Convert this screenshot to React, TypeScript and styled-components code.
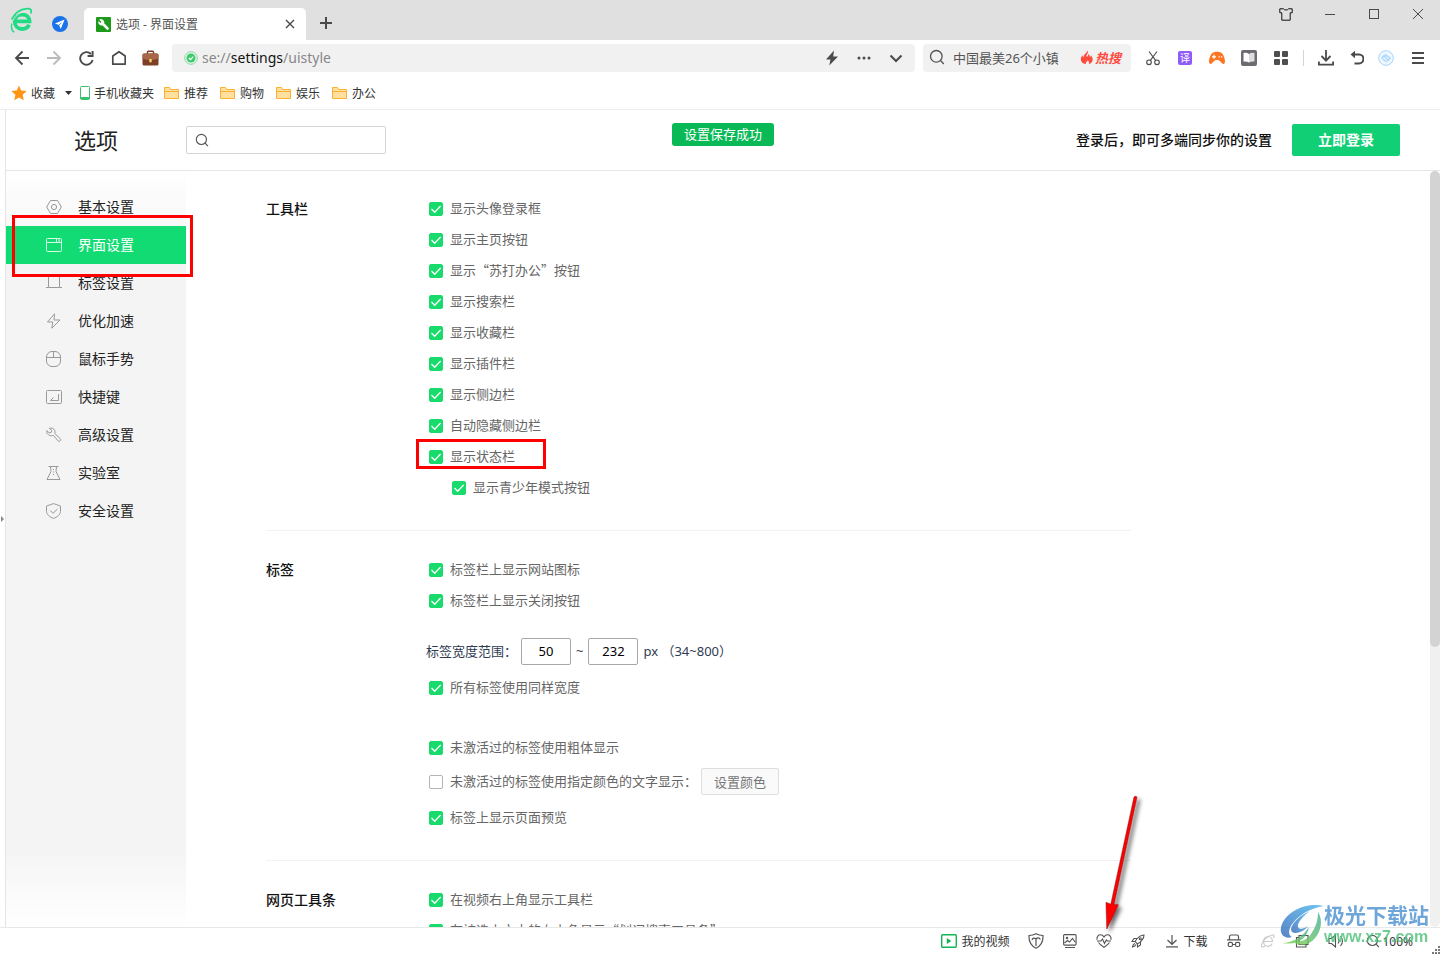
import React from "react";
import styled, { createGlobalStyle, css } from "styled-components";

const GlobalStyle = createGlobalStyle`
  *, *::before, *::after { box-sizing: border-box; }
  html, body, #root { height: 100%; margin: 0; }
  body {
    font-family: "Noto Sans", "Noto Sans CJK SC", sans-serif;
    font-size: 13px;
    color: #222;
    background: #fff;
    overflow: hidden;
  }
  button, input { font: inherit; color: inherit; }
  svg { display: block; flex: none; }
`;

const Window = styled.div`
  position: relative;
  display: flex;
  flex-direction: column;
  height: 100vh;
  white-space: nowrap;
`;

/* ---------- title bar ---------- */

const TitleBar = styled.header`
  display: flex;
  flex: none;
  height: 40px;
  padding-left: 10px;
  background: #e0e0e0;
`;

const BrandArea = styled.div`
  display: flex;
  width: 74px;
  padding-top: 7px;
  gap: 18px;
`;

const BareButton = styled.button`
  display: flex;
  align-items: center;
  justify-content: center;
  padding: 0;
  border: 0;
  background: none;
  color: #4a4a4a;
`;

const Tab = styled.div`
  display: flex;
  align-items: center;
  width: 222px;
  margin-top: 8px;
  padding: 0 8px 0 12px;
  gap: 5px;
  border-radius: 5px 5px 0 0;
  background: #fff;
  font-size: 12px;
  color: #555;
`;

const TabTitle = styled.span`
  flex: 1;
`;

const TabButton = styled(BareButton)`
  width: 16px;
  height: 16px;
`;

const NewTabButton = styled(BareButton)`
  width: 40px;
  height: 32px;
  margin-top: 7px;
`;

const WindowControls = styled.div`
  display: flex;
  margin-left: auto;
`;

const WindowButton = styled(BareButton)`
  width: 44px;
  height: 28px;
`;

/* ---------- toolbar ---------- */

const Toolbar = styled.div`
  display: flex;
  flex: none;
  align-items: center;
  height: 36px;
  padding: 0 6px;
`;

const ToolButton = styled(BareButton)<{ $narrow?: boolean }>`
  width: ${(p) => (p.$narrow ? 28 : 32)}px;
  height: 28px;
`;

const Field = styled.div`
  display: flex;
  align-items: center;
  height: 28px;
  border-radius: 4px;
  background: #f1f1f1;
`;

const AddressField = styled(Field)`
  flex: 1;
  margin: 0 8px 0 6px;
  padding: 0 3px 0 12px;
`;

const Address = styled.div`
  flex: 1;
  padding-left: 4px;
  font-size: 14px;
  line-height: 20px;
  color: #888;
  b { font-weight: 400; color: #111; }
`;

const SearchField = styled(Field)`
  width: 208px;
  margin-right: 6px;
  padding: 0 10px 2px 6px;
  gap: 8px;
`;

const SearchInput = styled.input`
  flex: 1;
  min-width: 0;
  padding: 0;
  border: 0;
  outline: 0;
  background: none;
  color: #555;
`;

const HotLink = styled.a`
  display: flex;
  align-items: center;
  gap: 1px;
  color: #ff4b3e;
  font-weight: 700;
  font-style: italic;
  text-decoration: none;
`;

const TranslateBadge = styled.span`
  width: 14px;
  height: 14px;
  border-radius: 2px;
  background: #8f5cf5;
  color: #fff;
  font-size: 10px;
  line-height: 14px;
`;

const ToolDivider = styled.span`
  width: 1px;
  height: 16px;
  margin: 0 6px;
  background: #d4d4d4;
`;

/* ---------- bookmarks ---------- */

const BookmarkBar = styled.nav`
  display: flex;
  flex: none;
  align-items: center;
  height: 34px;
  padding: 0 11px;
  gap: 6px;
  border-bottom: 1px solid #ececec;
`;

const FavoriteMenu = styled.div`
  display: flex;
  align-items: center;
  gap: 10px;
`;

const FolderList = styled.div`
  display: flex;
  gap: 12px;
  padding-left: 4px;
`;

const Bookmark = styled.a`
  display: flex;
  align-items: center;
  gap: 4px;
  font-size: 12px;
  color: #333;
  text-decoration: none;
`;

/* ---------- settings page ---------- */

const Body = styled.div`
  display: flex;
  flex: 1;
  min-height: 0;
`;

const Gutter = styled.div`
  display: flex;
  align-items: center;
  width: 6px;
  border-right: 1px solid #e4e4e4;
`;

const Page = styled.main`
  position: relative;
  display: flex;
  flex: 1;
  flex-direction: column;
  min-width: 0;
`;

const PageHeader = styled.div`
  display: flex;
  flex: none;
  align-items: center;
  height: 61px;
  padding: 0 40px 0 68px;
  border-bottom: 1px solid #e6e6e6;
`;

const PageTitle = styled.h1`
  width: 112px;
  margin: 0;
  padding-bottom: 2px;
  font-size: 22px;
  font-weight: 400;
`;

const PageSearch = styled.label`
  display: flex;
  align-items: center;
  width: 200px;
  height: 28px;
  padding: 0 8px;
  gap: 8px;
  border: 1px solid #d4d4d4;
  border-radius: 2px;
`;

const Toast = styled.div`
  position: absolute;
  top: 13px;
  left: 50%;
  transform: translateX(-50%);
  padding: 0 12px;
  border-radius: 3px;
  background: #09b955;
  color: #fff;
  line-height: 23px;
`;

const LoginHint = styled.strong`
  margin-left: auto;
  padding-bottom: 2px;
  font-size: 14px;
  font-weight: 500;
  color: #111;
`;

const LoginButton = styled.button`
  width: 108px;
  height: 32px;
  margin-left: 20px;
  padding: 0 0 2px;
  border: 0;
  border-radius: 2px;
  background: #10cf74;
  color: #fff;
  font-size: 14px;
  font-weight: 700;
`;

const Columns = styled.div`
  display: flex;
  flex: 1;
  min-height: 0;
`;

const Sidebar = styled.nav`
  flex: none;
  width: 180px;
  padding-top: 17px;
  background: linear-gradient(#fff, #f4f4f4 80px, #f4f4f4 calc(100% - 80px), #fff);
`;

const NavItem = styled.a<{ $active?: boolean }>`
  position: relative;
  display: flex;
  align-items: center;
  height: 38px;
  padding-left: 40px;
  gap: 16px;
  font-size: 14px;
  color: #222;
  text-decoration: none;
  svg { color: #999; }
  ${(p) =>
    p.$active &&
    css`
      z-index: 1;
      background: #13db73;
      color: #fff;
      svg { color: #d4ffe6; }
    `}
`;

const NavLabel = styled.span`
  padding-bottom: 2px;
`;

const Highlight = styled.span<{ $top: number; $left: number; $w: number; $h: number }>`
  position: absolute;
  top: ${(p) => p.$top}px;
  left: ${(p) => p.$left}px;
  width: ${(p) => p.$w}px;
  height: ${(p) => p.$h}px;
  border: 3px solid #f00;
  pointer-events: none;
`;

const Content = styled.div`
  flex: 1;
  min-width: 0;
  padding: 23px 80px 0;
  overflow: hidden;
`;

const Section = styled.section`
  display: flex;
  max-width: 865px;
`;

const SectionTitle = styled.h2`
  width: 160px;
  margin: 0;
  font-size: 14px;
  font-weight: 500;
  line-height: 30px;
  color: #111;
`;

const Divider = styled.hr`
  max-width: 865px;
  height: 1px;
  margin: 27px 0 24px;
  border: 0;
  background: #f2f2f2;
`;

const Options = styled.div`
  display: flex;
  flex-direction: column;
  align-items: flex-start;
`;

const OptionGroup = styled.div<{ $before?: number }>`
  display: flex;
  flex-direction: column;
  align-items: flex-start;
  gap: 1px;
  margin-top: ${(p) => p.$before ?? 0}px;
`;

const OptionRow = styled.div<{ $nested?: boolean }>`
  position: relative;
  display: flex;
  align-items: center;
  height: 30px;
  padding-left: ${(p) => (p.$nested ? 26 : 3)}px;
`;

const OptionLabel = styled.label`
  display: flex;
  align-items: center;
  gap: 7px;
  color: #666;
`;

/* The CJK face comes first here so that curly quotes are full width. */
const OptionText = styled.span`
  padding-bottom: 2px;
  font-family: "Noto Sans CJK SC", sans-serif;
  line-height: 20px;
`;

const CheckWrap = styled.span`
  position: relative;
  width: 14px;
  height: 14px;
  svg { position: absolute; top: 0; left: 0; pointer-events: none; }
`;

const CheckInput = styled.input`
  display: block;
  width: 14px;
  height: 14px;
  margin: 0;
  appearance: none;
  border: 1px solid #b4b4b4;
  border-radius: 2px;
  background: #fff;
  &:checked { border-color: #19db6c; background: #19db6c; }
  & + svg { display: none; }
  &:checked + svg { display: block; }
`;

const RangeRow = styled.div`
  display: flex;
  align-items: center;
  height: 27px;
  margin: 22px 0 8px;
  gap: 5px;
  color: #2f3b52;
`;

const RangeText = styled.span`
  padding-bottom: 2px;
`;

const NumberInput = styled.input`
  width: 50px;
  height: 27px;
  padding: 0 0 2px;
  border: 1px solid #a8a8a8;
  border-radius: 2px;
  background: #fff;
  color: #000;
  text-align: center;
`;

const RangeLabel = styled.label`
  width: 90px;
  padding-bottom: 2px;
`;

const ColorButton = styled.button`
  width: 78px;
  height: 27px;
  margin: 0 0 1px 4px;
  padding: 0;
  border: 1px solid #dedede;
  border-radius: 2px;
  background: #fafafa;
  color: #777;
`;

const ScrollTrack = styled.div`
  flex: none;
  width: 10px;
  border-radius: 5px;
  background: #f0f0f0;
`;

const ScrollThumb = styled.div`
  height: 63%;
  border-radius: 5px;
  background: #d3d3d3;
`;

/* ---------- status bar ---------- */

const StatusBar = styled.footer`
  display: flex;
  flex: none;
  align-items: center;
  justify-content: flex-end;
  height: 27px;
  padding-right: 17px;
  border-top: 1px solid #e8e8e8;
`;

const StatusButton = styled(BareButton)`
  width: 34px;
  height: 26px;
  color: #555;
`;

const StatusItem = styled(BareButton)`
  height: 26px;
  padding: 0 10px;
  gap: 4px;
  color: #333;
  font-size: 12px;
`;

const ZoomItem = styled(StatusItem)`
  padding-left: 13px;
  gap: 2px;
`;

const ResizeGrip = styled.span`
  position: absolute;
  right: 0;
  bottom: 0;
`;

const PointerArrow = styled.span`
  position: absolute;
  right: 290px;
  bottom: 14px;
  pointer-events: none;
`;

const Watermark = styled.div`
  position: absolute;
  right: 11px;
  bottom: 7px;
  display: flex;
  align-items: center;
  opacity: 0.8;
  pointer-events: none;
`;

const WatermarkText = styled.div`
  display: flex;
  flex-direction: column;
  color: #4a90d0;
  font-size: 21px;
  font-weight: 700;
  line-height: 24px;
`;

const WatermarkUrl = styled.span`
  color: #4cc078;
  font-family: "Liberation Sans", sans-serif;
  font-size: 16px;
  line-height: 20px;
`;

/* ---------- icons ---------- */

type IconProps = {
  w?: number;
  h?: number;
  sw?: number;
  children: React.ReactNode;
};

const Icon = ({ w = 16, h = 16, sw = 1, children }: IconProps) => (
  <svg
    width={w}
    height={h}
    viewBox={`0 0 ${w} ${h}`}
    fill="none"
    stroke="currentColor"
    strokeWidth={sw}
    aria-hidden="true"
  >
    {children}
  </svg>
);

const BrandIcon = () => (
  <svg width="24" height="26" viewBox="0 0 24 26" fill="none" aria-hidden="true">
    <path d="M5 14.300h14.500c0-4-3-6.700-7.300-6.700s-7.500 3-7.500 7.200 3.200 7.200 7.500 7.200c3.300 0 5.700-1.500 6.900-4.200" stroke="#1fdb84" strokeWidth="3.800" />
    <path d="M1.700 12.500C4.500 6.500 10 2.300 17 1.700c4-.3 5 1.300 3.800 4.800" stroke="#1fdb84" strokeWidth="1.800" />
    <path d="M1.800 16.500c-.8 4 .2 7.500 2.500 8.800" stroke="#1fdb84" strokeWidth="1.300" />
    <path d="M2.800 13.500C6 8 11 4.800 16.500 4" stroke="#e0e0e0" strokeWidth="1" />
  </svg>
);

const CompassIcon = () => (
  <svg width="16" height="16" viewBox="0 0 16 16" aria-hidden="true">
    <circle cx="8" cy="8" r="8" fill="#1a73e8" />
    <path d="M12.600 3.600 3 7.500l4 1.500 1.800 4z" fill="#fff" />
    <path d="M7 9l2.400-2.200" stroke="#1a73e8" strokeWidth=".8" />
  </svg>
);

const FaviconIcon = () => (
  <svg width="15" height="15" viewBox="0 0 15 15" aria-hidden="true">
    <rect width="15" height="15" rx="1" fill="#1d9a1a" />
    <path d="M6.500 6.500l5 5" stroke="#fff" strokeWidth="2.600" strokeLinecap="round" />
    <path
      d="M3.200 2.700l2.300 2.200-.7 1-2.400-1.700A3.300 3.300 0 0 0 6.500 8.300 3.300 3.300 0 0 0 8.300 5 3.300 3.300 0 0 0 3.200 2.700z"
      fill="#fff"
    />
  </svg>
);

const BriefcaseIcon = () => (
  <svg width="17" height="16" viewBox="0 0 17 16" aria-hidden="true">
    <path d="M5.500 4V2.200q0-1 1-1h4q1 0 1 1V4" fill="none" stroke="#7a3b22" strokeWidth="1.400" />
    <rect x=".5" y="3.500" width="16" height="12" rx="1.500" fill="#7d3f26" />
    <path d="M.5 5q0-1.500 1.500-1.500h13q1.500 0 1.500 1.500v3.500q-8 3-16 0z" fill="#a9674a" />
    <rect x="7.300" y="9" width="2.400" height="3.200" rx=".5" fill="#f5d76e" />
  </svg>
);

const FolderIcon = () => (
  <svg width="16" height="14" viewBox="0 0 16 14" aria-hidden="true">
    <path d="M.5 12.500v-11h5l1.500 2h7.500v9z" fill="#ffe0a0" stroke="#fcb031" />
    <path d="M1 5.500h13" stroke="#fcb031" />
  </svg>
);

const FlameIcon = () => (
  <svg width="14" height="15" viewBox="0 0 14 15" aria-hidden="true">
    <path
      d="M7.500.5c.8 2 .2 3.200-.8 4.500C6 6 6.500 7 7.300 6.600c1-.6.8-1.800 1-2.600 1.200.8 1.600 2 1.400 3 .8-.2 1.200-1 1.200-1.800 1.500 1.800 2.300 3.800 1.500 5.800-.6 1.700-2 2.800-3.600 3.200.8-1.400.2-2.600-1-3.900-.5 1.500-2 1.500-2.200 3.900C2.800 13.500.8 11.800.8 9.200c0-1.700.9-2.900 1.700-4 .1 1 .3 1.600 1 2C3.700 4 6.800 3.200 7.500.5z"
      fill="#ff4b3e"
    />
  </svg>
);

const TickMark = () => (
  <svg width="14" height="14" viewBox="0 0 14 14" fill="none" aria-hidden="true">
    <path d="M2.500 7l3.200 3.300L11.600 4" stroke="#fff" strokeWidth="1.300" />
  </svg>
);

const MagnifierIcon = ({ size = 16 }: { size?: number }) => (
  <svg width={size} height={size} viewBox="0 0 16 16" fill="none" stroke="#555" strokeWidth="1.300" aria-hidden="true">
    <circle cx="7.300" cy="7.300" r="5.800" />
    <path d="M11.500 11.500l3.300 3.500" />
  </svg>
);

const navItems: { label: string; icon: React.ReactNode }[] = [
  {
    label: "基本设置",
    icon: (
      <Icon>
        <path d="M4.500 1.500h7L15.300 8l-3.800 6.500h-7L.7 8z" />
        <circle cx="8" cy="8" r="2.600" />
      </Icon>
    ),
  },
  {
    label: "界面设置",
    icon: (
      <Icon>
        <rect x=".5" y="1.500" width="15" height="13" rx="1" />
        <path d="M.5 5.500h15M10.500 2v3M13 2v3" />
      </Icon>
    ),
  },
  {
    label: "标签设置",
    icon: (
      <Icon>
        <path d="M0 12.500h2.500v-11h11v11H16M2.500 12.500h11" />
      </Icon>
    ),
  },
  {
    label: "优化加速",
    icon: (
      <Icon>
        <path d="M8.500.8 1.500 9h5.300l-1 6.200L14 7H8z" strokeLinejoin="round" />
      </Icon>
    ),
  },
  {
    label: "鼠标手势",
    icon: (
      <Icon>
        <rect x=".5" y=".5" width="14" height="15" rx="5.500" />
        <path d="M.5 6.500h14M7.500.5v6" />
      </Icon>
    ),
  },
  {
    label: "快捷键",
    icon: (
      <Icon>
        <rect x=".5" y="1.500" width="15" height="13" rx="1" />
        <path d="M12.500 5v6.500h-8M4.500 11.500l3-3" />
      </Icon>
    ),
  },
  {
    label: "高级设置",
    icon: (
      <Icon>
        <path
          d="M3.300 1.300C5.500.6 8 1.500 8.800 3.500c.4 1.100.3 2-.1 3l5.600 5.200c1.300 1.500-.7 3.500-2.200 2.200L7.400 8.400c-3 1.200-6-.6-6.700-3.300-.1-.6 0-1 .1-1.500l2.400 2.300 2-.5.5-2z"
          strokeLinejoin="round"
        />
      </Icon>
    ),
  },
  {
    label: "实验室",
    icon: (
      <Icon>
        <path d="M2.500 1.500h10M4.500 1.500l.5 5-4 8h13l-4-8 .5-5" strokeLinejoin="round" />
        <path d="M7.500 4v7" strokeDasharray="1 1.500" />
      </Icon>
    ),
  },
  {
    label: "安全设置",
    icon: (
      <Icon>
        <path d="M7.500.6l7 2.400v5.500c0 3-3.500 5.600-7 7-3.500-1.400-7-4-7-7V3z" strokeLinejoin="round" />
        <path d="M4.300 7.500l2.700 2.800L11.500 6" />
      </Icon>
    ),
  },
];

const toolbarOptions = [
  "显示头像登录框",
  "显示主页按钮",
  "显示“苏打办公”按钮",
  "显示搜索栏",
  "显示收藏栏",
  "显示插件栏",
  "显示侧边栏",
  "自动隐藏侧边栏",
  "显示状态栏",
];

type OptionProps = {
  label: string;
  checked?: boolean;
  nested?: boolean;
  children?: React.ReactNode;
};

const Option = ({ label, checked = true, nested, children }: OptionProps) => (
  <OptionRow $nested={nested}>
    <OptionLabel>
      <CheckWrap>
        <CheckInput type="checkbox" defaultChecked={checked} />
        <TickMark />
      </CheckWrap>
      <OptionText>{label}</OptionText>
    </OptionLabel>
    {children}
  </OptionRow>
);

export default function App() {
  return (
    <Window>
      <GlobalStyle />
      <TitleBar>
        <BrandArea>
          <BrandIcon />
          <BareButton aria-label="导航">
            <CompassIcon />
          </BareButton>
        </BrandArea>
        <Tab>
          <FaviconIcon />
          <TabTitle>选项 - 界面设置</TabTitle>
          <TabButton aria-label="关闭标签">
            <Icon sw={1.4}>
              <path d="M4 4l8 8M12 4l-8 8" />
            </Icon>
          </TabButton>
        </Tab>
        <NewTabButton aria-label="新建标签">
          <Icon sw={2}>
            <path d="M8 2v12M2 8h12" />
          </Icon>
        </NewTabButton>
        <WindowControls>
          <WindowButton aria-label="皮肤">
            <svg width="14" height="13" viewBox="0 0 14 13" fill="none" stroke="#111" aria-hidden="true">
              <path d="M4.500.8H.8v4h2v7.400h8.400V4.800h2v-4H9.500C9 2.400 5 2.400 4.500.8z" strokeLinejoin="round" />
            </svg>
          </WindowButton>
          <WindowButton aria-label="最小化">
            <Icon>
              <path d="M3 8.500h10" />
            </Icon>
          </WindowButton>
          <WindowButton aria-label="最大化">
            <Icon>
              <rect x="3.500" y="3.500" width="9" height="9" />
            </Icon>
          </WindowButton>
          <WindowButton aria-label="关闭">
            <Icon>
              <path d="M3 3l10 10M13 3L3 13" />
            </Icon>
          </WindowButton>
        </WindowControls>
      </TitleBar>

      <Toolbar>
        <ToolButton aria-label="后退">
          <Icon sw={1.8}>
            <path d="M15 8H2M8.500 1.500L2 8l6.500 6.500" />
          </Icon>
        </ToolButton>
        <ToolButton aria-label="前进" disabled>
          <svg width="16" height="16" viewBox="0 0 16 16" fill="none" stroke="#bbb" strokeWidth="1.800" aria-hidden="true">
            <path d="M1 8h13M7.500 1.500L14 8l-6.500 6.500" />
          </svg>
        </ToolButton>
        <ToolButton aria-label="刷新">
          <Icon sw={1.9}>
            <path d="M13 4A6.300 6.300 0 1 0 14.600 10" />
            <path d="M14.600 1v5h-5" />
          </Icon>
        </ToolButton>
        <ToolButton aria-label="主页">
          <Icon sw={1.7}>
            <path d="M2.800 14.200V6L9 1.700 15.200 6v8.200z" strokeLinejoin="round" />
          </Icon>
        </ToolButton>
        <ToolButton aria-label="办公">
          <BriefcaseIcon />
        </ToolButton>
        <AddressField>
          <svg width="14" height="14" viewBox="0 0 14 14" fill="none" aria-hidden="true">
            <circle cx="7" cy="7" r="6.300" stroke="#7fdc9c" />
            <circle cx="7" cy="7" r="4.500" fill="#3ecb6b" />
            <path d="M4.800 7l1.700 1.700 2.800-3" stroke="#fff" strokeWidth="1.200" />
          </svg>
          <Address>
            se://<b>settings</b>/uistyle
          </Address>
          <ToolButton aria-label="极速模式">
            <svg width="14" height="16" viewBox="0 0 14 16" aria-hidden="true">
              <path d="M9 .5L1 9.500h4.500L4.300 15.500 13 6.500H8.200z" fill="#4a4a4a" />
            </svg>
          </ToolButton>
          <ToolButton aria-label="更多">
            <svg width="14" height="4" viewBox="0 0 14 4" fill="#4a4a4a" aria-hidden="true">
              <circle cx="2" cy="2" r="1.500" />
              <circle cx="7" cy="2" r="1.500" />
              <circle cx="12" cy="2" r="1.500" />
            </svg>
          </ToolButton>
          <ToolButton aria-label="展开">
            <Icon sw={2}>
              <path d="M2.500 5.500L8 11l5.500-5.500" />
            </Icon>
          </ToolButton>
        </AddressField>
        <SearchField>
          <MagnifierIcon />
          <SearchInput aria-label="搜索" defaultValue="中国最美26个小镇" />
          <HotLink href="#hot">
            <FlameIcon />
            热搜
          </HotLink>
        </SearchField>
        <ToolButton aria-label="截图">
          <Icon sw={1.1}>
            <path d="M4 1.500l6.800 9.200M12 1.500L5.200 10.700" />
            <circle cx="4" cy="12.300" r="2.300" />
            <circle cx="12" cy="12.300" r="2.300" />
          </Icon>
        </ToolButton>
        <ToolButton aria-label="翻译">
          <TranslateBadge>译</TranslateBadge>
        </ToolButton>
        <ToolButton aria-label="游戏">
          <svg width="16" height="14" viewBox="0 0 16 14" aria-hidden="true">
            <path
              d="M4 1.500c2-1 6-1 8 0 2.500 1.500 4 6 4 9 0 2.300-1.500 3-3 1.800C11.500 11 11 9 8 9s-3.500 2-5 3.300c-1.500 1.200-3 .5-3-1.800 0-3 1.500-7.500 4-9z"
              fill="#ff7622"
            />
            <path d="M3 5.800h4M5 3.800v4M9.500 5.800h1.300M12 5.800h1.300" stroke="#fff" strokeWidth="1.300" />
          </svg>
        </ToolButton>
        <ToolButton aria-label="阅读">
          <svg width="16" height="16" viewBox="0 0 16 16" aria-hidden="true">
            <rect width="16" height="16" rx="2" fill="#6b6b72" />
            <path d="M2.500 3q3-.8 5.500 1v8.500q-2.500-1.500-5.500-1z" fill="#fff" />
            <path d="M13.500 3q-3-.8-5.500 1v8.500q2.500-1.500 5.500-1z" fill="#ddd" />
          </svg>
        </ToolButton>
        <ToolButton aria-label="扩展">
          <svg width="14" height="14" viewBox="0 0 14 14" fill="#4f4f4f" aria-hidden="true">
            <rect width="6" height="6" rx="1" />
            <rect x="8" width="6" height="6" rx="1" />
            <rect y="8" width="6" height="6" rx="1" />
            <rect x="8" y="8" width="6" height="6" rx="1" />
          </svg>
        </ToolButton>
        <ToolDivider />
        <ToolButton aria-label="下载">
          <Icon sw={1.8}>
            <path d="M8 0v10.500M3.500 6L8 10.600 12.500 6M.9 11.500v3.200h14.200v-3.200" />
          </Icon>
        </ToolButton>
        <ToolButton $narrow aria-label="恢复">
          <Icon sw={2}>
            <path d="M5 4.500h6a4.200 4.200 0 0 1 0 8.900H6.500" />
            <path d="M2.500 4.500L7 .7v7.600z" fill="currentColor" stroke="none" />
          </Icon>
        </ToolButton>
        <ToolButton aria-label="账号">
          <svg width="16" height="16" viewBox="0 0 16 16" fill="none" stroke="#a4d4fb" aria-hidden="true">
            <circle cx="8" cy="8" r="7.300" fill="#f0f8ff" />
            <path d="M3.500 8.500L6 5.500l4 5 2.500-3M7 4.500l4.500 3M4.500 9l4.300 3" strokeWidth="1.400" />
          </svg>
        </ToolButton>
        <ToolButton aria-label="菜单">
          <Icon sw={2}>
            <path d="M2 3h12M2 8h12M2 13h12" />
          </Icon>
        </ToolButton>
      </Toolbar>

      <BookmarkBar>
        <FavoriteMenu>
          <Bookmark href="#favorites">
            <svg width="16" height="16" viewBox="0 0 16 16" aria-hidden="true">
              <path d="M8 .5l2.200 5 5.500.5-4.100 3.700 1.200 5.500L8 12.400l-4.800 2.800 1.200-5.500L.3 6l5.500-.5z" fill="#ff9412" />
            </svg>
            收藏
          </Bookmark>
          <svg width="7" height="4" viewBox="0 0 7 4" aria-hidden="true">
            <path d="M0 0h7L3.500 4z" fill="#333" />
          </svg>
        </FavoriteMenu>
        <Bookmark href="#mobile">
          <svg width="12" height="14" viewBox="0 0 12 14" fill="none" stroke="#3cbf70" aria-hidden="true">
            <rect x="2.500" y=".5" width="9" height="13" rx="1" />
            <path d="M2.500 12h9" strokeWidth="2" />
          </svg>
          手机收藏夹
        </Bookmark>
        <FolderList>
          {["推荐", "购物", "娱乐", "办公"].map((name) => (
            <Bookmark key={name} href={`#${name}`}>
              <FolderIcon />
              {name}
            </Bookmark>
          ))}
        </FolderList>
      </BookmarkBar>

      <Body>
        <Gutter>
          <svg width="4" height="6" viewBox="0 0 4 6" aria-hidden="true">
            <path d="M1 0l3 3-3 3z" fill="#888" />
          </svg>
        </Gutter>
        <Page>
          <PageHeader>
            <PageTitle>选项</PageTitle>
            <PageSearch>
              <MagnifierIcon size={14} />
              <SearchInput aria-label="搜索设置" />
            </PageSearch>
            <LoginHint>登录后，即可多端同步你的设置</LoginHint>
            <LoginButton>立即登录</LoginButton>
          </PageHeader>
          <Toast role="status">设置保存成功</Toast>
          <Columns>
            <Sidebar>
              {navItems.map((item, i) => (
                <NavItem key={item.label} href={`#${item.label}`} $active={i === 1}>
                  {item.icon}
                  <NavLabel>{item.label}</NavLabel>
                  {i === 1 && <Highlight $top={-11} $left={6} $w={181} $h={62} />}
                </NavItem>
              ))}
            </Sidebar>
            <Content>
              <Section>
                <SectionTitle>工具栏</SectionTitle>
                <OptionGroup>
                  {toolbarOptions.map((label) => (
                    <Option key={label} label={label}>
                      {label === "显示状态栏" && <Highlight $top={-3} $left={-10} $w={130} $h={30} />}
                    </Option>
                  ))}
                  <Option nested label="显示青少年模式按钮" />
                </OptionGroup>
              </Section>
              <Divider />
              <Section>
                <SectionTitle>标签</SectionTitle>
                <Options>
                  <OptionGroup>
                    <Option label="标签栏上显示网站图标" />
                    <Option label="标签栏上显示关闭按钮" />
                  </OptionGroup>
                  <RangeRow>
                    <RangeLabel htmlFor="tab-min">标签宽度范围：</RangeLabel>
                    <NumberInput id="tab-min" defaultValue="50" />
                    <RangeText>~</RangeText>
                    <NumberInput aria-label="最大宽度" defaultValue="232" />
                    <RangeText>px （34~800）</RangeText>
                  </RangeRow>
                  <Option label="所有标签使用同样宽度" />
                  <OptionGroup $before={30}>
                    <Option label="未激活过的标签使用粗体显示" />
                  </OptionGroup>
                  <OptionGroup $before={4}>
                    <Option checked={false} label="未激活过的标签使用指定颜色的文字显示：">
                      <ColorButton>设置颜色</ColorButton>
                    </Option>
                  </OptionGroup>
                  <OptionGroup $before={6}>
                    <Option label="标签上显示页面预览" />
                  </OptionGroup>
                </Options>
              </Section>
              <Divider />
              <Section>
                <SectionTitle>网页工具条</SectionTitle>
                <OptionGroup>
                  <Option label="在视频右上角显示工具栏" />
                  <Option label="在被选中文本的右上角显示“划词搜索工具条”" />
                </OptionGroup>
              </Section>
            </Content>
            <ScrollTrack>
              <ScrollThumb />
            </ScrollTrack>
          </Columns>
        </Page>
      </Body>

      <StatusBar>
        <StatusItem>
          <svg width="16" height="14" viewBox="0 0 16 14" fill="none" aria-hidden="true">
            <rect x=".7" y=".7" width="14.600" height="12.600" rx="1" stroke="#12b454" strokeWidth="1.400" />
            <path d="M5.800 4v6l4.500-3z" fill="#12b454" />
          </svg>
          我的视频
        </StatusItem>
        <StatusButton aria-label="防护">
          <Icon sw={1.2}>
            <path d="M8 .8Q11 2.500 15 2.500c.3 6-2 10.500-7 12.700C3 13 .7 8.500 1 2.500 5 2.500 8 .8 8 .8z" />
            <path d="M8 13V6M4 7c.5-2 2.500-2.500 4-1 1-1.500 3.500-1.500 4.300.5M5.500 4.800L8 6l2.500-1.500" />
          </Icon>
        </StatusButton>
        <StatusButton aria-label="图片">
          <Icon sw={1.1}>
            <rect x="1.600" y="1.600" width="12.500" height="10.500" rx="1" />
            <path d="M2.500 10l3-2.500 2 1.500 3-3.500 3 4M3 14.500h10" />
            <circle cx="5" cy="5" r=".7" />
          </Icon>
        </StatusButton>
        <StatusButton aria-label="健康">
          <Icon sw={1.1}>
            <path d="M1 6.800C.5 3.500 2.500 1.800 4.500 1.800 6 1.800 7.300 2.700 8 4c.7-1.300 2-2.200 3.500-2.200 2 0 4 1.700 3.500 5M2.500 9.500C4 11.800 6.500 13.300 8 14.300c1.500-1 4-2.500 5.500-4.800" />
            <path d="M1 8h4l1.500-2 2 4.500L10.300 7l1 1H15" />
          </Icon>
        </StatusButton>
        <StatusButton aria-label="加速">
          <Icon sw={1.1}>
            <path d="M14 2C10 2 7.500 4.500 5 8.500L7.500 11C11.500 8.500 14 6 14 2zM7 5.500H4L2 8.500h3M10.500 9v3l-3 2V11M5 10.500c-1.500.3-2.200 1.800-2.500 3.500 1.700-.3 3-1 3.500-2.500" />
            <circle cx="10.300" cy="5.700" r="1" />
          </Icon>
        </StatusButton>
        <StatusItem>
          <svg width="14" height="14" viewBox="0 0 14 14" fill="none" stroke="#555" strokeWidth="1.200" aria-hidden="true">
            <path d="M7 1v9M2.500 6L7 10.300 11.500 6M1 12.800h12" />
          </svg>
          下载
        </StatusItem>
        <StatusButton aria-label="无痕">
          <Icon sw={1.2}>
            <path d="M3.500 6.500v-3q0-1.500 1.500-1.500h6q1.500 0 1.500 1.500v3M1 6.800h14M6.500 11.500h3" />
            <rect x="2.300" y="9.300" width="4.200" height="4.200" rx="1.500" />
            <rect x="9.500" y="9.300" width="4.200" height="4.200" rx="1.500" />
          </Icon>
        </StatusButton>
        <StatusButton aria-label="内核" disabled>
          <svg width="16" height="16" viewBox="0 0 16 16" fill="none" stroke="#ccc" strokeWidth="1.200" aria-hidden="true">
            <path d="M3.500 8.500h9c0-3-2-5-4.500-5S3.500 5.800 3.500 8.500s2 4.800 4.500 4.800c2 0 3.500-1 4.200-2.700" />
            <path d="M13.500 5c1-2 .5-3.500-1.500-3C7 3 1 9 1.500 12.800c.2 1.500 2 1.200 3.500.2" />
          </svg>
        </StatusButton>
        <StatusButton aria-label="分屏">
          <Icon sw={1.1}>
            <rect x="5" y="2.500" width="9" height="9" />
            <path d="M5 4.500H2.500V14H12v-2.500" />
          </Icon>
        </StatusButton>
        <StatusButton aria-label="声音">
          <Icon sw={1.1}>
            <path d="M1 5.500h2.500L7.500 2v12l-4-3.500H1zM10 5.500q2 2.500 0 5M12.500 3q4 5 0 10" />
          </Icon>
        </StatusButton>
        <ZoomItem>
          <MagnifierIcon size={14} />
          100%
        </ZoomItem>
      </StatusBar>

      <ResizeGrip>
        <svg width="8" height="8" viewBox="0 0 8 8" fill="#777" aria-hidden="true">
          <path d="M6 0h2v2H6zM3 3h2v2H3zM6 3h2v2H6zM0 6h2v2H0zM3 6h2v2H3zM6 6h2v2H6z" />
        </svg>
      </ResizeGrip>

      <PointerArrow>
        <svg width="60" height="150" viewBox="1090 790 60 150" aria-hidden="true">
          <defs>
            <filter id="arrow-shadow" x="-50%" y="-10%" width="220%" height="125%">
              <feDropShadow dx="3" dy="3" stdDeviation="2" floodColor="#000" floodOpacity=".6" />
            </filter>
          </defs>
          <g filter="url(#arrow-shadow)" fill="#f00" stroke="#8a1010" strokeWidth=".5">
            <path d="M1134 797q1.500-1.500 3 0L1114 904.500 1118.300 904.800 1106.800 929 1106 902.300 1110.800 904.300z" />
          </g>
        </svg>
      </PointerArrow>

      <Watermark>
        <svg width="44" height="44" viewBox="0 0 44 44" aria-hidden="true">
          <defs>
            <linearGradient id="wm-blue" x1="1" y1="0" x2="0" y2="1">
              <stop offset="0" stopColor="#4ab8ee" />
              <stop offset="1" stopColor="#3166b8" />
            </linearGradient>
            <linearGradient id="wm-green" x1="1" y1="0" x2="0" y2="1">
              <stop offset="0" stopColor="#3fae9a" />
              <stop offset="1" stopColor="#7fd04a" />
            </linearGradient>
          </defs>
          <path
            d="M44 3C28-1 8 7 2 21c-4 9 2 16 10 13-4-2-4-8 1-14C19 12 30 5 44 3z"
            fill="url(#wm-blue)"
          />
          <path d="M30 8C20 12 12 20 11 26c0 4 4 5 9 3 4-1.500 7-4 8-6-4 3-9 4-10 1-1-4 5-11 12-16z" fill="url(#wm-blue)" />
          <path d="M38 9c7 11 1 27-11 32-6 2-11 0-14-2 8 0 14-2 18-8 5-7 7-14 7-22z" fill="url(#wm-green)" />
          <path d="M2 40c9 0 20-5 27-16-2 10-9 19-27 16z" fill="url(#wm-green)" />
        </svg>
        <WatermarkText>
          极光下载站
          <WatermarkUrl>www.xz7.com</WatermarkUrl>
        </WatermarkText>
      </Watermark>
    </Window>
  );
}
